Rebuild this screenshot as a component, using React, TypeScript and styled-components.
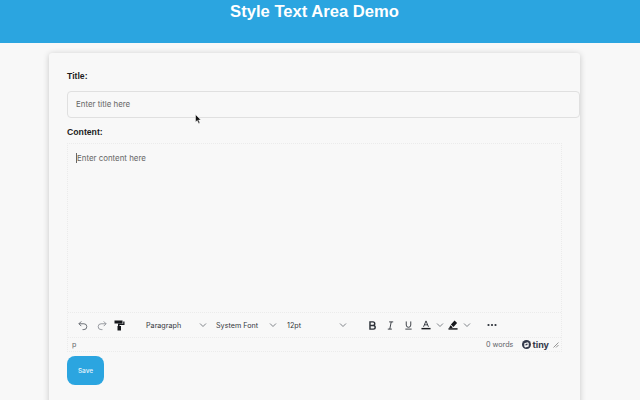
import React from "react";
import styled, { createGlobalStyle } from "styled-components";

const Global = createGlobalStyle`
  html, body { margin: 0; padding: 0; height: 400px; overflow: hidden; background: #f8f8f8; }
  body { font-family: "Liberation Sans", Arial, sans-serif; color: #222; }
  * { -webkit-font-smoothing: antialiased; }
`;

const Page = styled.div`
  position: relative;
  width: 640px;
  height: 400px;
  overflow: hidden;
`;

const Header = styled.header`
  box-sizing: border-box;
  height: 43px;
  padding-right: 11px;
  background: #2ba5e0;
  display: flex;
  justify-content: center;
`;

const Heading = styled.h1`
  margin: 2px 0 0;
  font-size: 16.6px;
  line-height: 20px;
  font-weight: 700;
  color: #fff;
`;

const Card = styled.main`
  box-sizing: border-box;
  width: 531px;
  height: 380px;
  margin: 10px 0 0 49px;
  padding: 18px 18px 0;
  background: #f8f8f8;
  border-radius: 3px;
  box-shadow: 0 1px 6px rgba(0, 0, 0, 0.2);
`;

const Label = styled.label`
  display: block;
  font-size: 8.7px;
  line-height: 11px;
  font-weight: 700;
  color: #1c1c1c;
`;

const TitleInput = styled.div`
  width: 100%;
  height: 25px;
  margin: 9px 0 9px;
  padding: 0 8px;
  border: 1px solid #e0e0e0;
  border-radius: 4px;
  font-family: Inter, sans-serif;
  font-size: 7.9px;
  line-height: 25px;
  color: #666;
`;

const Editor = styled.section`
  box-sizing: border-box;
  height: 209px;
  margin-top: 5px;
  display: flex;
  flex-direction: column;
  border: 1px dotted #ebebeb;
`;

const ContentArea = styled.div`
  flex: 1;
  padding: 9px 8px 0;
  font-family: Inter, sans-serif;
  font-size: 7.9px;
  line-height: 11px;
  color: #666;
`;

const Caret = styled.span`
  display: inline-block;
  width: 1px;
  height: 10px;
  vertical-align: -2px;
  background: #666;
`;

const Toolbar = styled.div`
  height: 24px;
  display: flex;
  align-items: center;
  padding-left: 5px;
  border-top: 1px dotted #ebebeb;
  font-family: Inter, sans-serif;
  font-size: 7.2px;
  color: #33373d;
`;

const IconButton = styled.span<{ $w?: number }>`
  width: ${(p) => p.$w ?? 19}px;
  height: 16px;
  display: flex;
  align-items: center;
  justify-content: center;
  flex: none;
`;

const Select = styled.span<{ $w: number }>`
  width: ${(p) => p.$w}px;
  flex: none;
  display: flex;
  align-items: center;
  justify-content: space-between;
  white-space: nowrap;
`;

const Status = styled.div`
  height: 13px;
  display: flex;
  align-items: center;
  padding: 0 2px 0 4px;
  border-top: 1px dotted #ebebeb;
  font-family: Inter, sans-serif;
  font-size: 7.2px;
  color: #5f6368;
`;

const Words = styled.span`
  margin-left: auto;
`;

const Tiny = styled.span`
  display: flex;
  align-items: center;
  gap: 1px;
  margin-left: 9px;
  font-size: 9px;
  font-weight: 700;
  color: #33394a;
`;

const Grip = styled.span`
  display: flex;
  margin-left: 4px;
`;

const SaveButton = styled.button`
  display: block;
  width: 37px;
  height: 29px;
  margin-top: 4px;
  padding: 0;
  border: 0;
  border-radius: 8px;
  background: #2ba5e0;
  color: #e8f5fc;
  font-family: Inter, sans-serif;
  font-size: 6.5px;
  font-weight: 500;
`;

const Pointer = styled.svg`
  position: absolute;
  left: 195px;
  top: 114px;
`;

const Chevron = () => (
  <svg width="8" height="8" viewBox="0 0 8 8" fill="none" stroke="#70757c" strokeWidth="0.9">
    <path d="M1 2.5 4 5.5 7 2.5" />
  </svg>
);

const Undo = () => (
  <svg width="10" height="11" viewBox="0 0 11 11" fill="none" stroke="#5f646b" strokeWidth="1">
    <path d="M3.6 1 1 3.6l2.6 2.6M1 3.6h5.5a3.2 3.2 0 0 1 0 6.4H5" />
  </svg>
);

const Redo = () => (
  <svg width="10" height="11" viewBox="0 0 11 11" fill="none" stroke="#8d9197" strokeWidth="1">
    <path d="M7.4 1 10 3.6 7.4 6.2M10 3.6H4.5a3.2 3.2 0 0 0 0 6.4H6" />
  </svg>
);

const Roller = () => (
  <svg width="11" height="11" viewBox="0 0 11 11" fill="#16181c">
    <path d="M0.5 0.5h8v3h-8zM9 1.5h1.5v3.5H5.5v1H7v4.5H3.5V6H4V3.8h5.2V1.5z" />
  </svg>
);

const Bold = () => (
  <svg width="9" height="9" viewBox="0 0 10 10" fill="none" stroke="#2c3138" strokeWidth="1.6">
    <path d="M2.2 1h3.3a2 2 0 0 1 0 4H2.2zM2.2 5h3.8a2 2 0 0 1 0 4H2.2z" />
  </svg>
);

const Italic = () => (
  <svg width="9" height="9" viewBox="0 0 10 10" fill="none" stroke="#2c3138" strokeWidth="1">
    <path d="M3.5 1h4.5M2 9h4.5M5.8 1 4.2 9" />
  </svg>
);

const Underline = () => (
  <svg width="9" height="9" viewBox="0 0 10 10" fill="none" stroke="#2c3138" strokeWidth="1">
    <path d="M2.5 0.5v4a2.5 2.5 0 0 0 5 0v-4M1.5 9h7" />
  </svg>
);

const TextColor = () => (
  <svg width="10" height="10" viewBox="0 0 11 11" fill="none">
    <path d="M2.8 7.5 5.5 1l2.7 6.5M3.8 5.3h3.4" stroke="#2c3138" strokeWidth="1" />
    <path d="M0.5 9.5h10" stroke="#16181c" strokeWidth="1.6" />
  </svg>
);

const Highlight = () => (
  <svg width="10" height="10" viewBox="0 0 11 11" fill="#16181c">
    <path d="M7.2 0.6 10 3.2 6 7.6 3.2 5zM2.7 5.8l2.5 2.3-1 .7H1.2z" />
    <rect x="0.5" y="9" width="10" height="1.6" />
  </svg>
);

const More = () => (
  <svg width="10" height="4" viewBox="0 0 10 4" fill="#2c3138">
    <circle cx="1.5" cy="2" r="1.1" />
    <circle cx="5" cy="2" r="1.1" />
    <circle cx="8.5" cy="2" r="1.1" />
  </svg>
);

const TinyLogo = () => (
  <svg width="9" height="9" viewBox="0 0 9 9">
    <circle cx="4.5" cy="4.5" r="4.5" fill="#33394a" />
    <path d="M2.3 6.6V3.2l3.4-1 1 .9v3.4l-3.4 1z" fill="#f8f8f8" />
    <path d="M3.5 5.6V4l2-.6v1.6z" fill="#33394a" />
  </svg>
);

const Resize = () => (
  <svg width="6" height="6" viewBox="0 0 6 6" stroke="#8a8a8a" strokeWidth="0.9">
    <path d="M0.5 5.5 5.5 0.5M3 5.5 5.5 3" />
  </svg>
);

export default function App() {
  return (
    <Page>
      <Global />
      <Header>
        <Heading>Style Text Area Demo</Heading>
      </Header>
      <Card>
        <Label>Title:</Label>
        <TitleInput>Enter title here</TitleInput>
        <Label>Content:</Label>
        <Editor>
          <ContentArea>
            <Caret />
            Enter content here
          </ContentArea>
          <Toolbar>
            <IconButton><Undo /></IconButton>
            <IconButton><Redo /></IconButton>
            <IconButton $w={17}><Roller /></IconButton>
            <IconButton $w={18} />
            <Select $w={61}>Paragraph <Chevron /></Select>
            <IconButton $w={9} />
            <Select $w={61}>System Font <Chevron /></Select>
            <IconButton $w={10} />
            <Select $w={60}>12pt <Chevron /></Select>
            <IconButton $w={16} />
            <IconButton $w={18}><Bold /></IconButton>
            <IconButton $w={18}><Italic /></IconButton>
            <IconButton $w={18}><Underline /></IconButton>
            <IconButton $w={18}><TextColor /></IconButton>
            <IconButton $w={9}><Chevron /></IconButton>
            <IconButton $w={18}><Highlight /></IconButton>
            <IconButton $w={9}><Chevron /></IconButton>
            <IconButton $w={42}><More /></IconButton>
          </Toolbar>
          <Status>
            <span>p</span>
            <Words>0 words</Words>
            <Tiny><TinyLogo />tiny</Tiny>
            <Grip><Resize /></Grip>
          </Status>
        </Editor>
        <SaveButton>Save</SaveButton>
      </Card>
      <Pointer width="7" height="10" viewBox="0 0 7 10">
        <path d="M0.5 0.5v7.6l1.8-1.6 1.3 3 1.3-.6-1.3-2.9h2.3z" fill="#111" stroke="#fff" strokeWidth="0.5" />
      </Pointer>
    </Page>
  );
}
